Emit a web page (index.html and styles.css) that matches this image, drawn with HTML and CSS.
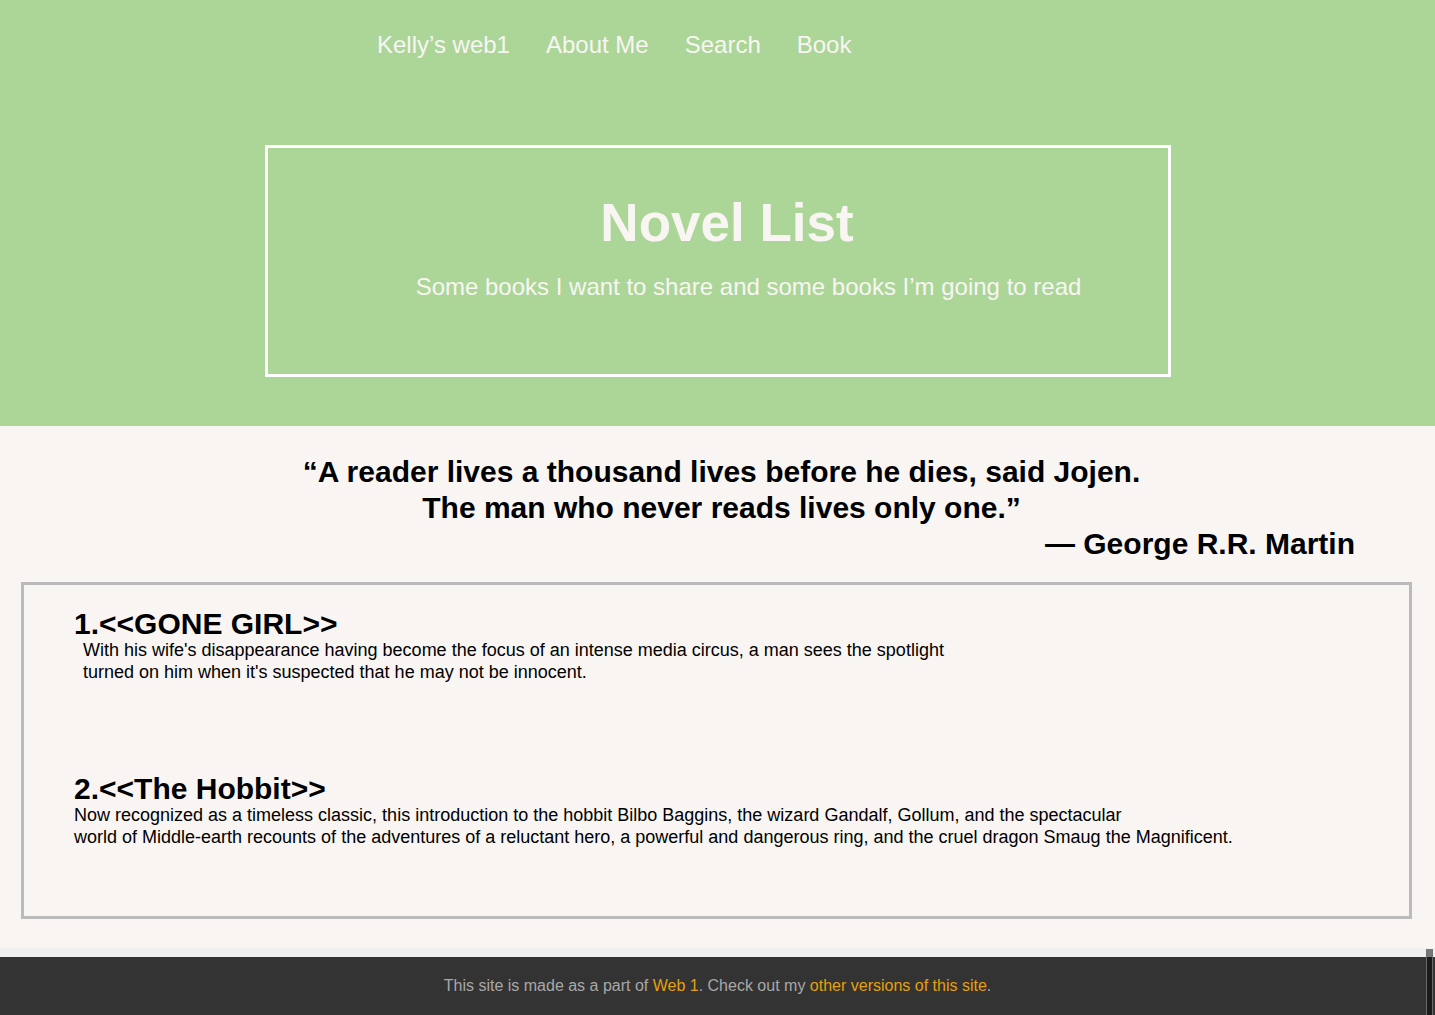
FILE: index.html
```html
<!DOCTYPE html>
<html lang="en">
<head>
<meta charset="utf-8">
<title>Novel List</title>
<link rel="stylesheet" href="styles.css">
</head>
<body>
<header class="top">
  <nav class="nav">
    <a class="nav-link" href="#">Kelly’s web1</a>
    <a class="nav-link" href="#">About Me</a>
    <a class="nav-link" href="#">Search</a>
    <a class="nav-link" href="#">Book</a>
  </nav>
  <section class="hero">
    <h1 class="hero-title">Novel List</h1>
    <p class="hero-sub">Some books I want to share and some books I’m going to read</p>
  </section>
</header>
<main class="content">
  <blockquote class="quote">
    <p class="quote-text">“A reader lives a thousand lives before he dies, said Jojen.<br>The man who never reads lives only one.”</p>
    <p class="quote-author">— George R.R. Martin</p>
  </blockquote>
  <section class="books">
    <article class="book">
      <h2 class="book-title">1.&lt;&lt;GONE GIRL&gt;&gt;</h2>
      <p class="book-desc book-desc-indent">With his wife's disappearance having become the focus of an intense media circus, a man sees the spotlight<br>turned on him when it's suspected that he may not be innocent.</p>
    </article>
    <article class="book book-second">
      <h2 class="book-title">2.&lt;&lt;The Hobbit&gt;&gt;</h2>
      <p class="book-desc">Now recognized as a timeless classic, this introduction to the hobbit Bilbo Baggins, the wizard Gandalf, Gollum, and the spectacular<br>world of Middle-earth recounts of the adventures of a reluctant hero, a powerful and dangerous ring, and the cruel dragon Smaug the Magnificent.</p>
    </article>
  </section>
</main>
<footer class="footer">
  <div class="footer-bar">
    <p class="footer-text">This site is made as a part of <a class="footer-link" href="#">Web 1</a>. Check out my <a class="footer-link" href="#">other versions of this site</a>.</p>
    <span class="footer-scroll"></span>
  </div>
</footer>
</body>
</html>
```

FILE: styles.css
```css
html, body {
  margin: 0;
  padding: 0;
}
body {
  background: #f8f5f3;
  font-family: "Liberation Sans", Arial, sans-serif;
  color: #000;
}
.top {
  background: #acd698;
  height: 426px;
  box-sizing: border-box;
  padding-top: 31px;
}
.nav {
  display: flex;
  gap: 36px;
  padding-left: 377px;
}
.nav-link {
  color: #f8f5f3;
  text-decoration: none;
  font-size: 24px;
  line-height: 28px;
}
.hero {
  width: 900px;
  height: 226px;
  margin: 86px auto 0;
  border: 3px solid #ffffff;
  text-align: center;
  color: #f8f5f3;
}
.hero-title {
  margin: 45px 0 0;
  padding-left: 19px;
  font-size: 53px;
  line-height: 60px;
  font-weight: bold;
}
.hero-sub {
  margin: 20px 0 0;
  padding-left: 62px;
  font-size: 24px;
  line-height: 28px;
}
.content {
  padding-top: 28px;
  padding-bottom: 29px;
}
.quote {
  margin: 0;
  font-weight: bold;
  font-size: 30px;
  line-height: 36px;
}
.quote-text {
  margin: 0;
  text-align: center;
  padding-left: 8px;
}
.quote-author {
  margin: 0;
  text-align: right;
  padding-right: 80px;
}
.books {
  margin: 20px 23px 0 21px;
  border: 3px solid #bbbbbb;
  padding: 24px 50px 68px;
}
.book-title {
  margin: 0;
  font-size: 30px;
  line-height: 30px;
  font-weight: bold;
}
.book-desc {
  margin: 0;
  font-size: 18px;
  line-height: 22px;
}
.book-desc-indent {
  padding-left: 9px;
}
.book-second {
  margin-top: 91px;
}
.footer {
  background: #f0f0f0;
  padding-top: 9px;
}
.footer-bar {
  position: relative;
  background: #333333;
  height: 58px;
  display: flex;
  align-items: center;
  justify-content: center;
}
.footer-text {
  margin: 0;
  color: #a8a8a8;
  font-size: 16px;
  line-height: 20px;
}
.footer-link {
  color: #e5a00d;
  text-decoration: none;
}
.footer-scroll {
  position: absolute;
  right: 2px;
  top: -8px;
  width: 7px;
  height: 72px;
  background: #1b1b1b;
  border: 1px solid #6a6a6a;
  border-top: 8px solid #777777;
  border-radius: 0 0 4px 4px;
  box-sizing: border-box;
}
```
